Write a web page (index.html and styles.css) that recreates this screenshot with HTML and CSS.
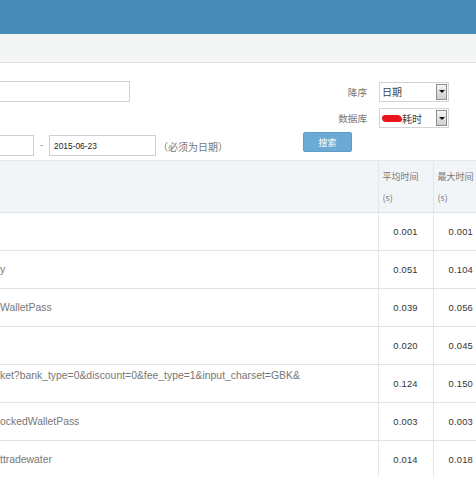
FILE: index.html
```html
<!DOCTYPE html>
<html lang="zh">
<head>
<meta charset="utf-8">
<title>耗时统计</title>
<link rel="stylesheet" href="styles.css">
</head>
<body>
<div class="topbar"></div>
<div class="subbar"></div>
<div class="form">
  <div class="row row1">
    <input class="inp kw" type="text" value="">
    <div class="spacer"></div>
    <span class="lbl">降序</span>
    <div class="sel"><span class="sel-text">日期</span><span class="arrow"><i></i></span></div>
  </div>
  <div class="row row2">
    <div class="spacer"></div>
    <span class="lbl">数据库</span>
    <div class="sel"><span class="sel-text"><span class="redact"></span>耗时</span><span class="arrow"><i></i></span></div>
  </div>
  <div class="row row3">
    <input class="inp d1" type="text" value="">
    <span class="dash">-</span>
    <input class="inp d2" type="text" value="2015-06-23">
    <span class="note">（必须为日期）</span>
    <div class="spacer"></div>
    <button class="btn" type="button">搜索</button>
  </div>
</div>
<table class="grid">
  <colgroup><col class="c1"><col class="c2"><col class="c3"></colgroup>
  <thead>
    <tr><th></th><th>平均时间<br>(s)</th><th>最大时间<br>(s)</th></tr>
  </thead>
  <tbody>
    <tr><td class="name"></td><td class="num">0.001</td><td class="num">0.001</td></tr>
    <tr><td class="name">y</td><td class="num">0.051</td><td class="num">0.104</td></tr>
    <tr><td class="name">WalletPass</td><td class="num">0.039</td><td class="num">0.056</td></tr>
    <tr><td class="name"></td><td class="num">0.020</td><td class="num">0.045</td></tr>
    <tr><td class="name top">ket?bank_type=0&amp;discount=0&amp;fee_type=1&amp;input_charset=GBK&amp;</td><td class="num">0.124</td><td class="num">0.150</td></tr>
    <tr><td class="name">ockedWalletPass</td><td class="num">0.003</td><td class="num">0.003</td></tr>
    <tr><td class="name">ttradewater</td><td class="num">0.014</td><td class="num">0.018</td></tr>
  </tbody>
</table>
</body>
</html>
```
FILE: styles.css
```css
html, body {
  margin: 0;
  padding: 0;
  width: 476px;
  height: 477px;
  overflow: hidden;
  background: #fff;
}
body {
  font-family: "Liberation Sans", "Noto Sans CJK SC", sans-serif;
  color: #666;
}
.topbar {
  height: 34px;
  background: #478cb9;
}
.subbar {
  height: 28px;
  background: #f4f5f5;
  border-bottom: 1px solid #dfe1e2;
}
.form {
  padding-top: 18px;
}
.row {
  display: flex;
  align-items: center;
}
.spacer { flex: 1; }
.row1 { height: 21px; }
.row2 { height: 20px; margin-top: 6px; }
.row3 { height: 24px; margin-top: 4px; align-items: flex-start; }
.inp {
  box-sizing: border-box;
  height: 21px;
  border: 1px solid #cfcfcf;
  padding: 0 0 0 4px;
  margin: 0;
  background: #fff;
  outline: none;
  font-family: "Liberation Sans", sans-serif;
  font-size: 8.4px;
  color: #222;
}
.kw { width: 131px; margin-left: -1px; }
.d1 { width: 35px; margin-left: -1px; margin-top: 3px; }
.d2 { width: 107px; margin-top: 3px; }
.dash {
  width: 15px;
  text-align: center;
  margin-top: 8px;
  font-size: 9px;
  color: #777;
}
.note {
  margin-left: 2px;
  margin-top: 7px;
  font-family: "Noto Sans CJK SC", sans-serif;
  font-size: 10px;
  color: #777;
}
.lbl {
  font-family: "Noto Sans CJK SC", sans-serif;
  font-size: 9.6px;
  color: #777;
  margin-right: 12px;
}
.sel {
  box-sizing: border-box;
  width: 70px;
  height: 20px;
  margin-right: 27px;
  border: 1px solid #d4d4d4;
  display: flex;
  align-items: center;
  justify-content: space-between;
  background: #fff;
}
.sel-text {
  display: flex;
  align-items: center;
  padding-left: 2px;
  font-family: "Noto Sans CJK SC", sans-serif;
  font-size: 10px;
  color: #444;
}
.redact {
  width: 20px;
  height: 7px;
  background: #e8151e;
  border-radius: 4px 6px 3px 5px;
}
.arrow {
  box-sizing: border-box;
  width: 11px;
  height: 16px;
  margin-right: 1px;
  border: 1px solid #8f8f8f;
  background: linear-gradient(#f4f4f4, #cfcfcf);
  display: flex;
  align-items: center;
  justify-content: center;
}
.arrow i {
  width: 0;
  height: 0;
  border-left: 3px solid transparent;
  border-right: 3px solid transparent;
  border-top: 3px solid #111;
}
.btn {
  box-sizing: border-box;
  width: 49px;
  height: 20px;
  margin: 0 124px 0 0;
  padding: 0;
  border: 1px solid #5d9dca;
  border-radius: 2px;
  background: #6aaad5;
  color: #fff;
  font-family: "Noto Sans CJK SC", sans-serif;
  font-size: 9px;
}
.grid {
  margin-top: 4px;
  margin-left: -3px;
  border-collapse: collapse;
  table-layout: fixed;
  width: 491px;
}
.c1 { width: 381px; }
.c2 { width: 55px; }
.c3 { width: 55px; }
.grid th {
  background: #f2f5f7;
  border-top: 1px solid #e6e9eb;
  border-bottom: 1px solid #e0e3e5;
  border-left: 1px solid #e4e7e9;
  text-align: left;
  vertical-align: top;
  font-weight: normal;
  font-family: "Noto Sans CJK SC", sans-serif;
  font-size: 9px;
  line-height: 21px;
  color: #777;
  height: 42px;
  padding: 5px 4px 4px;
}
.grid th:first-child { border-left: 0; }
.grid td {
  height: 37px;
  padding: 0;
  border-bottom: 1px solid #e3e3e3;
  border-left: 1px solid #e6e6e6;
}
.grid td.name {
  border-left: 0;
  padding-left: 3px;
  font-size: 10.4px;
  color: #777;
  white-space: nowrap;
  overflow: hidden;
}
.grid td.top {
  height: 32px;
  vertical-align: top;
  padding-top: 5px;
  line-height: 12px;
}
.grid td.num {
  text-align: center;
  font-family: "Liberation Sans", sans-serif;
  font-size: 9.4px;
  letter-spacing: 0.2px;
  color: #333;
}
```
